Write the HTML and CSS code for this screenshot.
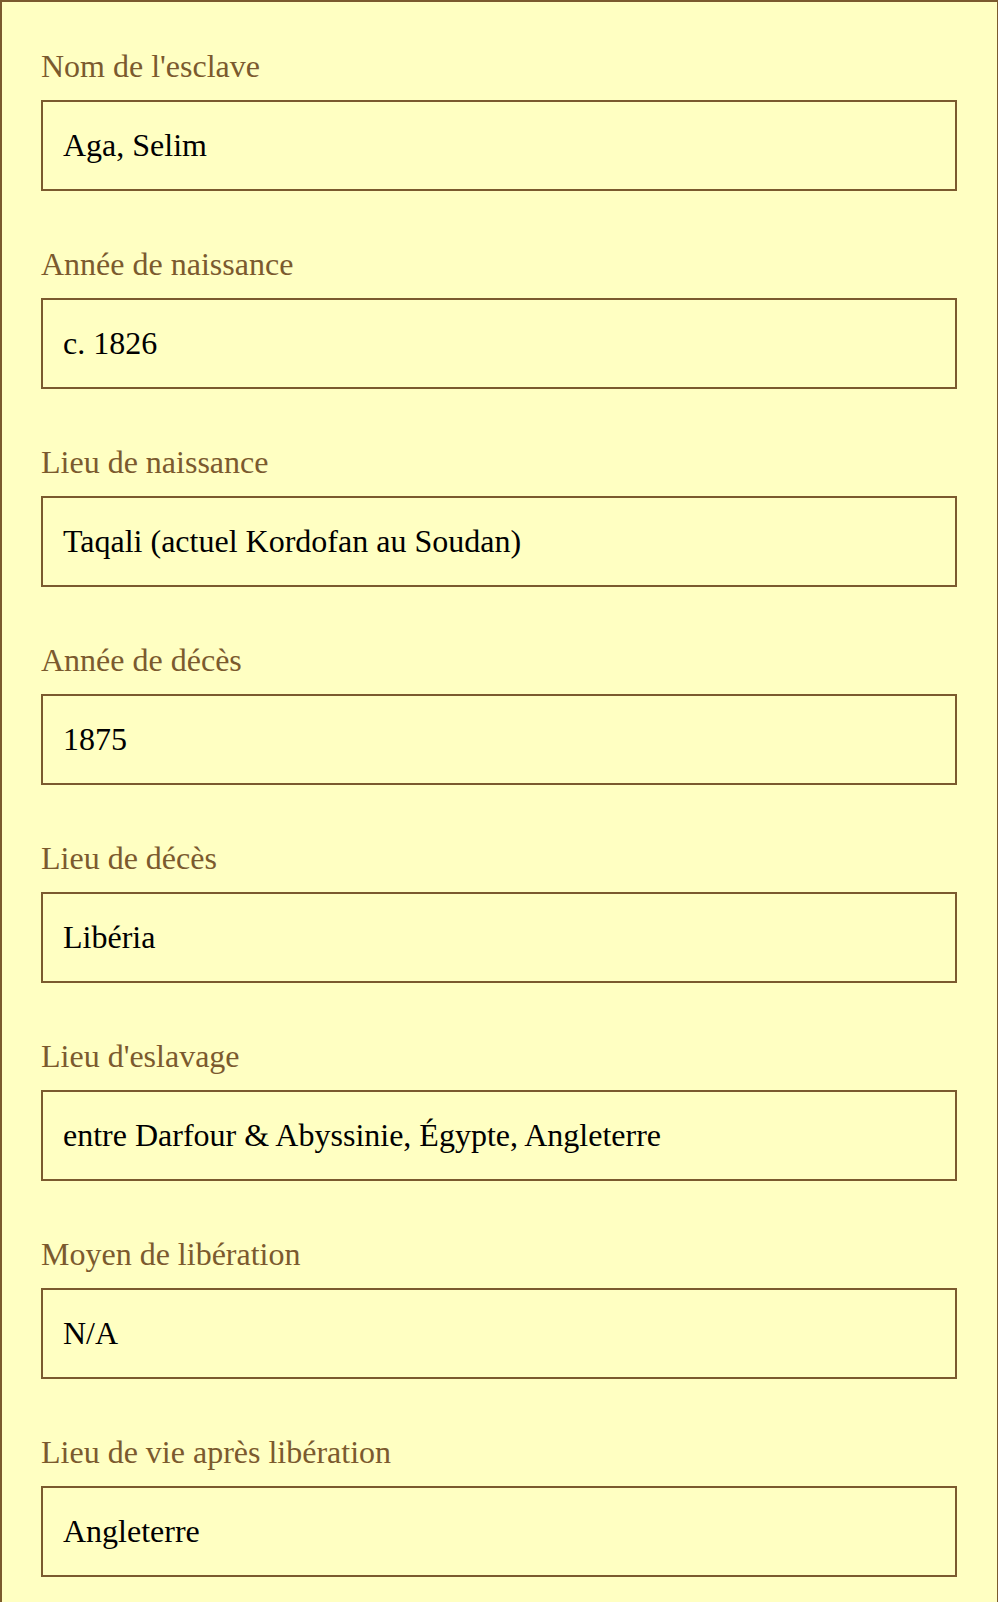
FILE: index.html
```html
<!DOCTYPE html>
<html lang="fr">
<head>
<meta charset="utf-8">
<title>Fiche</title>
<link rel="stylesheet" href="styles.css">
</head>
<body>
<main class="card">
  <div class="field">
    <div class="label">Nom de l'esclave</div>
    <div class="value">Aga, Selim</div>
  </div>
  <div class="field">
    <div class="label">Année de naissance</div>
    <div class="value">c. 1826</div>
  </div>
  <div class="field">
    <div class="label">Lieu de naissance</div>
    <div class="value">Taqali (actuel Kordofan au Soudan)</div>
  </div>
  <div class="field">
    <div class="label">Année de décès</div>
    <div class="value">1875</div>
  </div>
  <div class="field">
    <div class="label">Lieu de décès</div>
    <div class="value">Libéria</div>
  </div>
  <div class="field">
    <div class="label">Lieu d'eslavage</div>
    <div class="value">entre Darfour &amp; Abyssinie, Égypte, Angleterre</div>
  </div>
  <div class="field">
    <div class="label">Moyen de libération</div>
    <div class="value">N/A</div>
  </div>
  <div class="field">
    <div class="label">Lieu de vie après libération</div>
    <div class="value">Angleterre</div>
  </div>
</main>
</body>
</html>
```
FILE: styles.css
```css
html, body {
  margin: 0;
  padding: 0;
  background: #ffffc2;
}
body {
  font-family: "Liberation Serif", "Times New Roman", serif;
  font-size: 32px;
  line-height: 36px;
}
.card {
  box-sizing: border-box;
  width: 998px;
  min-height: 1700px;
  border: 2px solid #7b5a2e;
  border-right-width: 1px;
  padding: 46px 40px 40px 39px;
  background: #ffffc2;
  display: flex;
  flex-direction: column;
  gap: 55px;
}
.field {
  display: flex;
  flex-direction: column;
  gap: 16px;
}
.label {
  color: #7b5a2e;
}
.value {
  border: 2px solid #7b5a2e;
  padding: 25px 20px 26px 20px;
  color: #000;
}
```
